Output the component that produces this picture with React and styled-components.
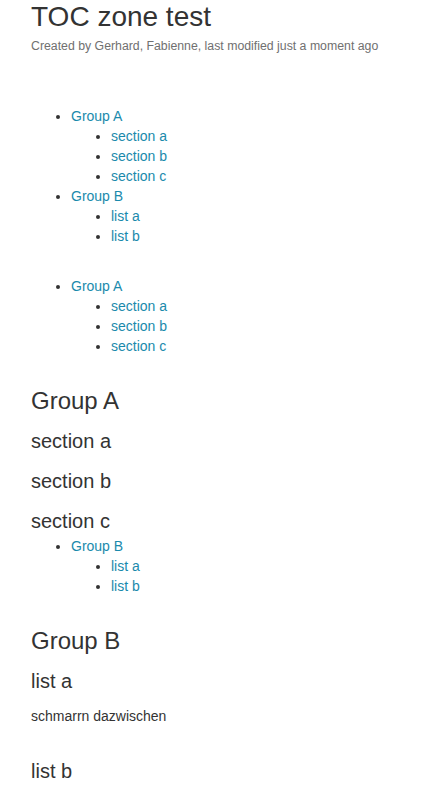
import React from "react";
import styled, { createGlobalStyle } from "styled-components";

const GlobalStyle = createGlobalStyle`
  body {
    margin: 0;
    background: #fff;
    font-family: "Liberation Sans", Arial, sans-serif;
    color: #333;
  }
`;

const toc = [
  { label: "Group A", children: ["section a", "section b", "section c"] },
  { label: "Group B", children: ["list a", "list b"] },
];

const Page = styled.div`
  padding: 0 20px 0 31px;
`;

const Title = styled.h1`
  margin: 0;
  font-size: 28px;
  line-height: 33px;
  font-weight: normal;
  color: #333;
`;

const Meta = styled.div`
  margin-top: 5px;
  font-size: 12.3px;
  line-height: 16px;
  color: #707070;
`;

const List = styled.ul`
  margin: ${(p) => p.$top || 0}px 0 0;
  padding-left: 40px;
  list-style: disc;
  font-size: 14px;
  line-height: 20px;
  color: #333;

  ul {
    margin: 0;
    padding-left: 40px;
    list-style: disc;
  }
`;

const Link = styled.a`
  color: #1a8aac;
  text-decoration: none;
`;

const H1 = styled.h2`
  margin: ${(p) => p.$top}px 0 0;
  font-size: 24px;
  line-height: 30px;
  font-weight: normal;
  color: #333;
`;

const H2 = styled.h3`
  margin: ${(p) => p.$top}px 0 0;
  font-size: 20px;
  line-height: 30px;
  font-weight: normal;
  color: #333;
`;

const Para = styled.p`
  margin: 10px 0 0;
  font-size: 14px;
  line-height: 20px;
  color: #333;
`;

const TocList = ({ items, top }) => (
  <List $top={top}>
    {items.map((g) => (
      <li key={g.label}>
        <Link href="#">{g.label}</Link>
        <ul>
          {g.children.map((c) => (
            <li key={c}>
              <Link href="#">{c}</Link>
            </li>
          ))}
        </ul>
      </li>
    ))}
  </List>
);

export default function App() {
  return (
    <Page>
      <GlobalStyle />
      <Title>TOC zone test</Title>
      <Meta>Created by Gerhard, Fabienne, last modified just a moment ago</Meta>
      <TocList items={toc} top={52} />
      <TocList items={[toc[0]]} top={30} />
      <H1 $top={30}>Group A</H1>
      <H2 $top={10}>section a</H2>
      <H2 $top={10}>section b</H2>
      <H2 $top={10}>section c</H2>
      <TocList items={[toc[1]]} top={0} />
      <H1 $top={30}>Group B</H1>
      <H2 $top={10}>list a</H2>
      <Para>schmarrn dazwischen</Para>
      <H2 $top={30}>list b</H2>
    </Page>
  );
}
